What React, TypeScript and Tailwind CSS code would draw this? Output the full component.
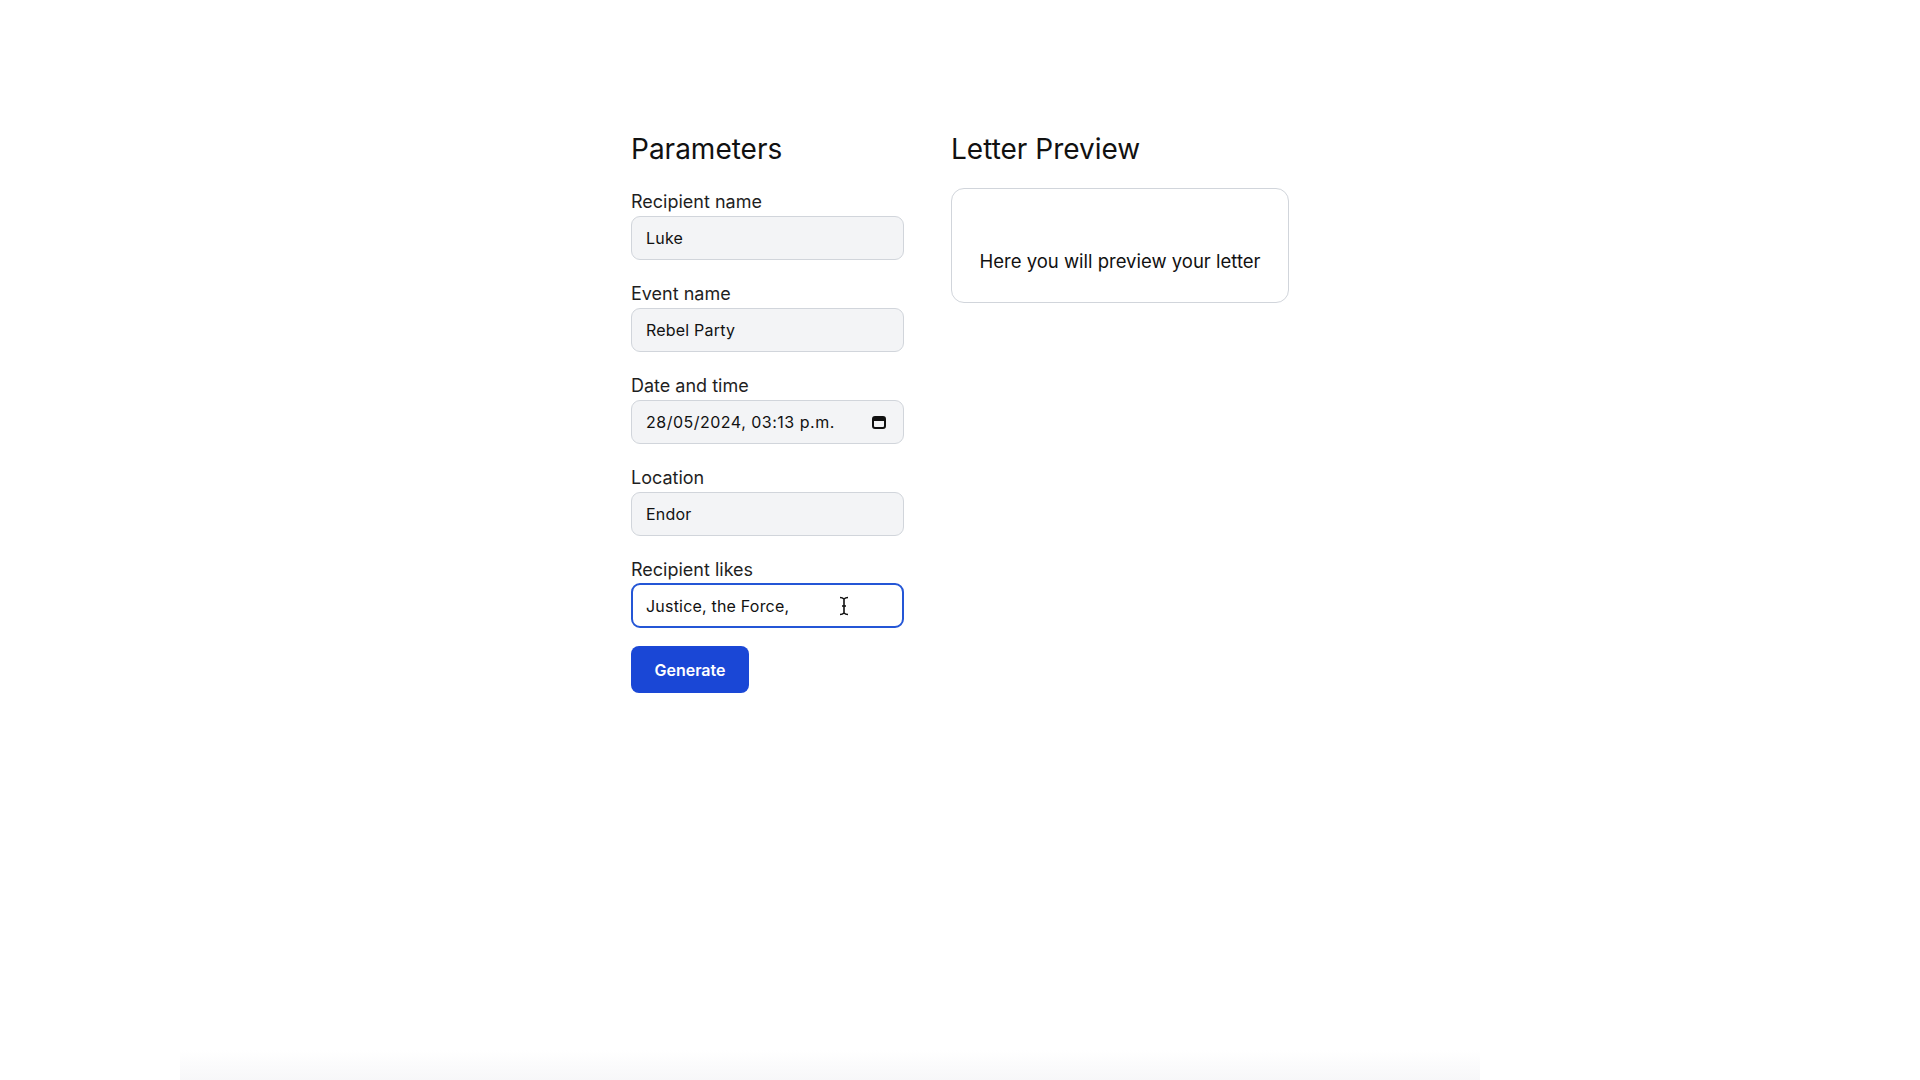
import React, { useState } from 'react';

interface Field {
  id: string;
  label: string;
  value: string;
  type?: string;
}

const fields: Field[] = [
  { id: 'recipient', label: 'Recipient name', value: 'Luke' },
  { id: 'event', label: 'Event name', value: 'Rebel Party' },
  { id: 'date', label: 'Date and time', value: '28/05/2024, 03:13 p.m.', type: 'date' },
  { id: 'location', label: 'Location', value: 'Endor' },
];

const CalendarGlyph = () => (
  <svg width="14" height="13" viewBox="0 0 14 13" className="shrink-0">
    <rect x="1" y="1" width="12" height="11" rx="2" fill="none" stroke="#111" strokeWidth="2" />
    <rect x="1" y="1" width="12" height="4" rx="1" fill="#111" />
  </svg>
);

const IBeam = () => (
  <svg width="10" height="20" viewBox="0 0 10 20" className="absolute left-[208px] top-[13px]">
    <path d="M1 1.5 C3 1.5 4 2 5 3 C6 2 7 1.5 9 1.5 M5 3 V17 M1 18.5 C3 18.5 4 18 5 17 C6 18 7 18.5 9 18.5 M3 10 H7" fill="none" stroke="#111" strokeWidth="1.6" />
  </svg>
);

export default function App() {
  const [likes, setLikes] = useState('Justice, the Force,');

  return (
    <div className="relative min-h-screen bg-white text-[#111] font-['Inter','Liberation_Sans',sans-serif] overflow-hidden">
      <div className="flex justify-center gap-[47px] pt-[133px]">
        {/* PARAMETERS */}
        <div className="w-[273px] flex flex-col">
          <h2 className="text-[28px] leading-[33px] font-normal">Parameters</h2>
          <div className="mt-[22px] flex flex-col gap-[20px]">
            {fields.map((f) => (
              <div key={f.id} className="flex flex-col">
                <label className="text-[18px] leading-[28px] text-[#1f1f1f]">{f.label}</label>
                <div className="h-[44px] flex items-center justify-between pl-[14px] pr-[17px] bg-[#f3f4f6] border border-[#d1d5db] rounded-[9px] text-[16px] text-[#111]">
                  <span className={f.type === 'date' ? 'tracking-[0.5px]' : 'tracking-[0.2px]'}>{f.value}</span>
                  {f.type === 'date' && <CalendarGlyph />}
                </div>
              </div>
            ))}
            <div className="flex flex-col">
              <label className="text-[18px] leading-[28px] text-[#1f1f1f]">Recipient likes</label>
              <div className="relative h-[45px] -mt-[1px]">
                <input
                  value={likes}
                  onChange={(e) => setLikes(e.target.value)}
                  className="w-full h-full pl-[13px] bg-white border-2 border-[#2456d6] rounded-[9px] text-[16px] tracking-[0.2px] text-[#111] outline-none"
                />
                <IBeam />
              </div>
            </div>
          </div>
          <button className="mt-[18px] w-[118px] h-[47px] bg-[#1a47d6] text-white text-[16px] font-semibold rounded-[8px]">
            Generate
          </button>
        </div>

        {/* LETTER PREVIEW */}
        <div className="w-[338px] flex flex-col">
          <h2 className="text-[28px] leading-[33px] font-normal">Letter Preview</h2>
          <div className="mt-[22px] border border-[#d1d5db] rounded-[13px] pt-[59px] pb-[27px] text-center text-[18.5px] leading-[27px]">
            Here you will preview your letter
          </div>
        </div>
      </div>

      <div className="absolute bottom-0 left-[180px] right-[440px] h-[30px] bg-gradient-to-b from-transparent to-[#ececf0] opacity-40" />
    </div>
  );
}
